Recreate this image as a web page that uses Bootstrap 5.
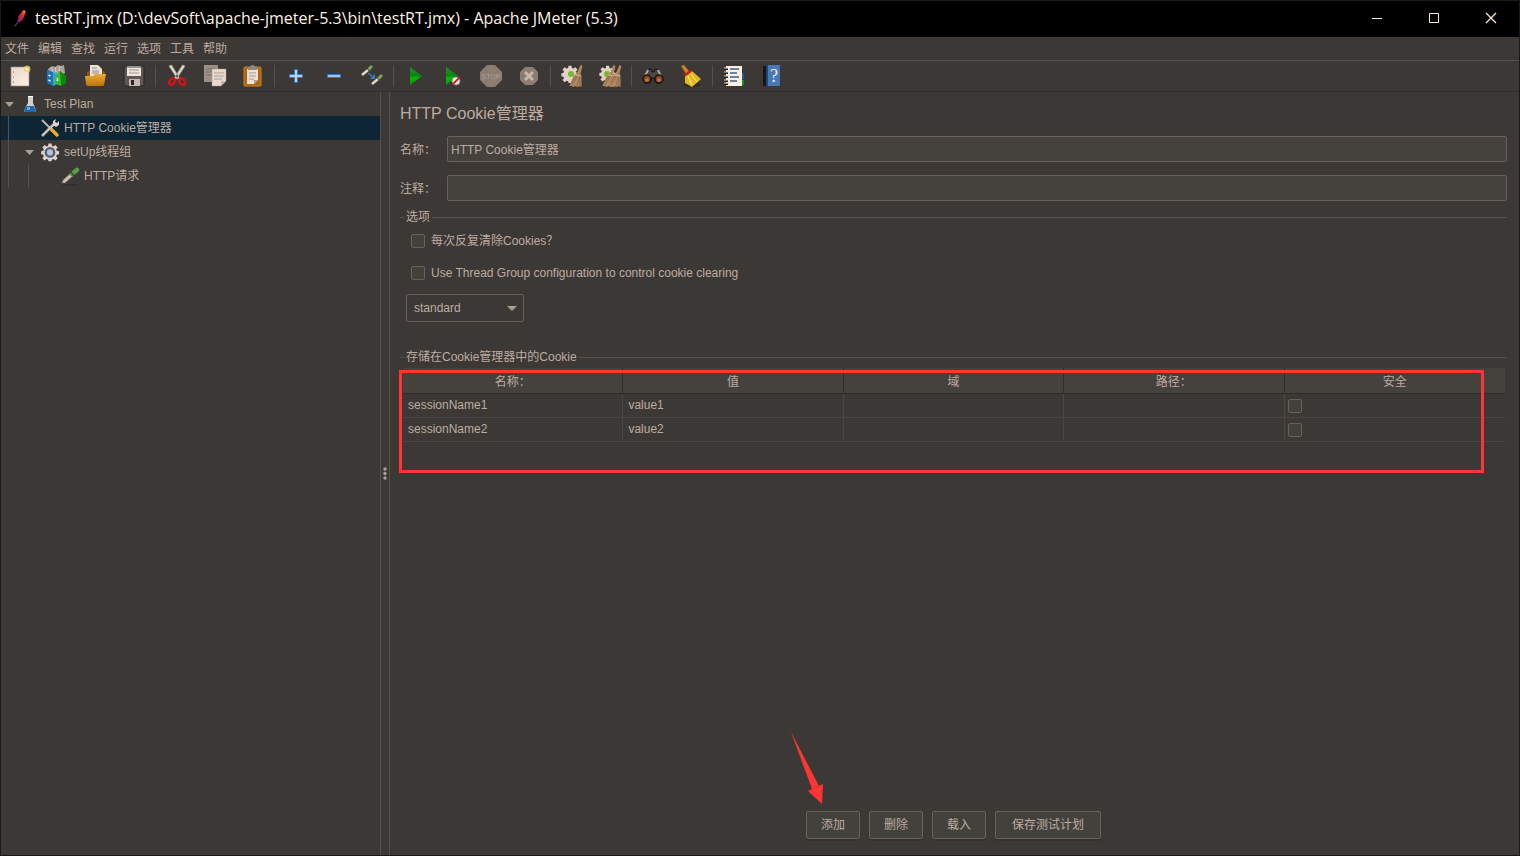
<!DOCTYPE html>
<html lang="zh-CN">
<head>
<meta charset="utf-8">
<meta name="viewport" content="width=device-width, initial-scale=1">
<title>testRT.jmx - Apache JMeter (5.3)</title>
<link href="https://cdn.jsdelivr.net/npm/bootstrap@5.3.0/dist/css/bootstrap.min.css" rel="stylesheet">
<style>
:root{--bg:#3c3835;--fg:#bcaca1;--line:#55504b;--edge:#6a605a;--field:#45413d;--red:#ff3535}
body{background:var(--bg);color:var(--fg);font:12px/24px "Liberation Sans","Noto Sans CJK SC",sans-serif;border:1px solid #1b1a19}
.titlebar{background:#000;color:#fff0e4;height:36px;font-family:"Open Sans",sans-serif;font-size:16px;padding-bottom:2px}
.feather{width:18px;height:18px;margin:0 7px 1px 9px}
.win-btn{width:57px;height:36px;color:#ffe8d8}
.win-btn svg{display:block;margin:auto}
.plain{background:none;border:0;padding:0}
.menubar{height:24px;border-bottom:1px solid var(--line);padding-left:4px;gap:9px}
.menubar a,.tree a{color:inherit;text-decoration:none}
.toolbar{height:31px;border-bottom:1px solid #312e2b}
.tool{width:38px;height:30px}
.tool svg{width:24px;height:24px;display:block;margin:auto}
.tool-sep{width:5px;height:22px;flex:none;background:linear-gradient(var(--line),var(--line)) center/1px 100% no-repeat}
.tree{width:379px;flex:none}
.tree ul{list-style:none;margin:0;padding:0}
.tree-row{height:24px}
.tree-row svg{flex:none}
.indent{width:20px;height:24px;flex:none}
.guide{background:linear-gradient(var(--line),var(--line)) 7px 0/1px 100% no-repeat}
.twisty{width:19px;height:24px;flex:none}
.picked{background:#0e2536}
.divider{width:10px;flex:none;border:1px solid var(--line);border-width:0 1px}
.main-pane{padding:9px 12px 16px 10px;min-width:0}
.main-pane h1{font-size:16px;line-height:26px;margin:0 0 9px;font-weight:400}
.field-row{margin-bottom:13px}
.field-row label{width:47px;flex:none;padding-top:1px}
.text-box{height:26px;background:var(--field);border:1px solid var(--edge);border-radius:2px;color:var(--fg);padding:0 3px 2px;font-size:12px;min-width:0}
.group legend{float:none;font-size:12px;line-height:16px;margin:0;gap:2px}
.group legend::before{content:"";width:4px;border-top:1px solid var(--line)}
.group legend::after{content:"";flex:1;border-top:1px solid var(--line)}
.group-options{margin-top:-5px}
.tick{appearance:none;width:14px;height:14px;margin:0;flex:none;background:#43413c;border:1px solid var(--edge);border-radius:2px}
.tick:checked{background:#8a8078}
.options{margin-top:-4px}
.options .check-row{height:32px;padding-left:11px;gap:6px}
.policy{width:118px;height:28px;margin:5px 0 27px 6px;padding:0 7px 1px;font-size:12px;color:var(--fg);background:var(--bg);border:1px solid var(--edge);border-radius:2px;appearance:none}
.policy-box svg{right:7px;top:17px;pointer-events:none}
.grid-wrap{margin:3px 2px 0 3px;height:105px}
.cookies{width:100%;table-layout:fixed;border-collapse:separate;border-spacing:0}
.cookies th{height:26px;line-height:22px;padding:3px 0 0;background:var(--field);font-weight:400;text-align:center;border-bottom:1px solid #2f2c29;border-right:1px solid #312e2b}
.cookies td{height:24px;line-height:20px;padding:0 5px 2px;border-bottom:1px solid #4b4642;border-right:1px solid #4b4642}
.cookies th:last-child,.cookies td:last-child{border-right:0}
.cookies td:last-child{padding:0 3px}
.cookies .tick{display:block}
.callout{border:3px solid var(--red);left:-4px;right:21px;top:2px;bottom:0;pointer-events:none}
.actions-row{gap:9px}
.act{height:28px;padding:0 14px;background:#43413c;color:var(--fg);border:1px solid var(--edge);border-radius:2px;box-shadow:0 2px 0 #353230;line-height:26px}
.act-wide{padding:0 16px}
.pointer{left:-16px;bottom:34px;width:36px;height:74px;pointer-events:none}
</style>
</head>
<body class="d-flex flex-column vh-100 overflow-hidden">
<svg width="0" height="0" class="position-absolute" aria-hidden="true">
 <defs>
  <linearGradient id="gGreen" x2="0" y2="1"><stop stop-color="#268c25"/><stop offset=".5" stop-color="#0a860a"/><stop offset=".6" stop-color="#0ab80b"/><stop offset="1" stop-color="#079106"/></linearGradient>
  <linearGradient id="gGold" x2="0" y2="1"><stop stop-color="#e7ad3e"/><stop offset="1" stop-color="#bd7306"/></linearGradient>
  <linearGradient id="gPaper" x2="1" y2="1"><stop stop-color="#e7d4c8"/><stop offset="1" stop-color="#fff0e4"/></linearGradient>
  <linearGradient id="gFeather" x1="1" x2="0" y2="1"><stop stop-color="#f69a22"/><stop offset=".45" stop-color="#d9232e"/><stop offset="1" stop-color="#702a78"/></linearGradient>
  <g id="cog"><path d="M10 1h4l.5 3 2 .8L19 3l3 3-2 2.500.8 2 3 .5v4l-3 .5-.8 2L22 20l-3 3-2.500-2-2 .8-.5 2.200h-4l-.5-2.200-2-.8L5 23l-3-3 2-2.500-.8-2-2.700-.5v-4l2.700-.5.8-2L2 6l3-3 2.500 1.800 2-.8z" fill="#e0d2c7"/></g>
  <g id="brush"><path d="M20.500 1l2 1-2 7 1 3v11l-2-1-2 1-2-1-2 1-2-1-2 0 4-10 4-4z" fill="#b08863"/><path d="M18 11l-6 10M20 11l-3 11M20 13l0 9M16 12l-5 7" stroke="#8a623e" stroke-width=".8"/><path d="M15 11l6 1" stroke="#d8b08a"/></g>
 </defs>
</svg>

<header class="titlebar d-flex align-items-center flex-shrink-0">
 <svg class="feather" viewBox="0 0 20 20"><path d="M14 2l2-1 1.500 2-3 8-4 4-2-1 1-6z" fill="url(#gFeather)"/><path d="M9.500 13l-4 6" stroke="#68306f" stroke-width="1.300"/></svg>
 <span class="flex-grow-1 text-truncate">testRT.jmx (D:\devSoft\apache-jmeter-5.3\bin\testRT.jmx) - Apache JMeter (5.3)</span>
 <button class="plain win-btn" aria-label="最小化"><svg width="12" height="12"><path d="M1 6.500h10" stroke="currentColor"/></svg></button>
 <button class="plain win-btn" aria-label="最大化"><svg width="12" height="12"><path d="M1.500 1.500h9v9h-9z" fill="none" stroke="currentColor"/></svg></button>
 <button class="plain win-btn" aria-label="关闭"><svg width="12" height="12"><path d="M1 1l10 10M11 1L1 11" stroke="currentColor" stroke-width="1.300"/></svg></button>
</header>

<nav class="menubar d-flex flex-shrink-0">
 <a href="#">文件</a><a href="#">编辑</a><a href="#">查找</a><a href="#">运行</a><a href="#">选项</a><a href="#">工具</a><a href="#">帮助</a>
</nav>

<div class="toolbar d-flex align-items-center flex-shrink-0" role="toolbar">
 <button class="plain tool" aria-label="新建"><svg viewBox="0 0 24 24"><path d="M3 3h18v19H3z" fill="url(#gPaper)" stroke="#9c8f85" stroke-width=".7"/><path d="M5.500 7v2M5.500 12v2M5.500 17v2" stroke="#b6a79b"/><circle cx="19" cy="5" r="3.500" fill="#ead36a" opacity=".75"/><circle cx="19" cy="5" r="1.500" fill="#fff6a8"/></svg></button>
 <button class="plain tool" aria-label="模板"><svg viewBox="0 0 24 24"><path d="M2 5l4-3 3 1 3-2 3 1 3-1 1 8-8 4-8-3z" fill="#a8a29c"/><path d="M5 3l2 5M9 3l1 5M14 2l-1 5" stroke="#d8cdc5"/><path d="M1 6l6 2v14l-6-3z" fill="#1673b5"/><path d="M7 8l4 1v11l-4 2z" fill="#39a4dc"/><path d="M9 12l5-5 2 3v12l-7-2z" fill="#3cba2e"/><path d="M14 7l6 5v7l-5 3z" fill="#0b8a0b"/><path d="M2.500 11l2 1M2.500 16l2 1M11.500 14v3" stroke="#e7eee5" stroke-width="1.600"/></svg></button>
 <button class="plain tool" aria-label="打开"><svg viewBox="0 0 24 24"><path d="M3 8l2-1h15l1 2-1 12H3z" fill="#8c550b"/><path d="M6 1h8l4 4v9H6z" fill="#eee1d7"/><path d="M8 4h5M8 7h7M8 9h7" stroke="#938982"/><path d="M1 12h8l2-2h11l-2 11q0 1-2 1H4q-2 0-2-2z" fill="url(#gGold)"/></svg></button>
 <button class="plain tool" aria-label="保存"><svg viewBox="0 0 24 24"><rect x="2" y="2" width="20" height="20" rx="1" fill="#5c5755" stroke="#282625"/><path d="M5 2h14v10H5z" fill="#f2e3d8"/><path d="M5 2h14v2H5z" fill="#8d9699"/><path d="M7 6h10M7 9h10" stroke="#9b9998"/><path d="M7 15h11v7H7z" fill="#c5b8ae"/><path d="M9 16h3v5H9z" fill="#292827"/></svg></button>
 <span class="tool-sep"></span>
 <button class="plain tool" aria-label="剪切"><svg viewBox="0 0 24 24"><path d="M4 2l2.500-1 8 13-2 1zM20 2l-2.500-1L9.500 14l2 1z" fill="#e2d8cf" stroke="#afa59d" stroke-width=".7"/><ellipse cx="7" cy="17.500" rx="2.500" ry="3.500" transform="rotate(35 7 17.500)" fill="none" stroke="#d31414" stroke-width="2.500"/><ellipse cx="17" cy="17.500" rx="2.500" ry="3.500" transform="rotate(-35 17 17.500)" fill="none" stroke="#d31414" stroke-width="2.500"/></svg></button>
 <button class="plain tool" aria-label="复制"><svg viewBox="0 0 24 24"><path d="M1 1h14v17H1z" fill="#9c8f87"/><path d="M3 5h10M3 8h10M3 11h8" stroke="#796f69"/><path d="M9 5h14v12l-5 5H9z" fill="#ecd9cd" stroke="#a69a91" stroke-width=".5"/><path d="M11 9h10M11 12h10M11 15h8" stroke="#aaa097"/><path d="M23 17h-5v5z" fill="#c6b6ac"/></svg></button>
 <button class="plain tool" aria-label="粘贴"><svg viewBox="0 0 24 24"><rect x="3" y="3" width="17" height="19" rx="1" fill="#ab650d" stroke="#d28422"/><path d="M6 5h11v11l-4 4H6z" fill="#eee1d8"/><path d="M8 9h7M8 12h7M8 15h5" stroke="#999691"/><path d="M7 3h2q0-2 2.500-2t2.500 2h2v3H7z" fill="#8d8b80"/><path d="M17 16h-4v4z" fill="#aaa097"/></svg></button>
 <span class="tool-sep"></span>
 <button class="plain tool" aria-label="展开"><svg viewBox="0 0 24 24"><path d="M10.500 5.500h3v5h5v3h-5v5h-3v-5h-5v-3h5z" fill="#b6d0ed" stroke="#3675bd"/></svg></button>
 <button class="plain tool" aria-label="折叠"><svg viewBox="0 0 24 24"><path d="M5.500 10.500h13v3h-13z" fill="#a4c2e8" stroke="#3675bd"/></svg></button>
 <button class="plain tool" aria-label="切换"><svg viewBox="0 0 24 24"><path d="M2 11l6-5M12 20l6-5" stroke="#e5d4c6" stroke-width="2.500"/><path d="M8 6l4-4M18 15l4-4" stroke="#7fa650" stroke-width="3"/><path d="M7 4l3 4M16.500 13l3 4" stroke="#3f5a2e" stroke-width="1"/><path d="M8 9l5 4" stroke="#367cc6" stroke-width="1.500"/><path d="M15 10v5h-5z" fill="#367cc6"/></svg></button>
 <span class="tool-sep"></span>
 <button class="plain tool" aria-label="启动"><svg viewBox="0 0 24 24"><path d="M7 3l12 9-12 9z" fill="url(#gGreen)"/></svg></button>
 <button class="plain tool" aria-label="不停顿开始"><svg viewBox="0 0 24 24"><path d="M5 3l12 9-12 9z" fill="url(#gGreen)"/><circle cx="15" cy="17" r="4" fill="#f1e8e4" stroke="#8794a5"/><path d="M11.500 20.500l7-7" stroke="#d51919" stroke-width="1.800"/></svg></button>
 <button class="plain tool" aria-label="停止"><svg viewBox="0 0 24 24"><path d="M8 1h8l7 7v8l-7 7H8l-7-7V8z" fill="#897c73"/><text x="12" y="15" text-anchor="middle" font-size="7" font-weight="700" fill="#a69486">STOP</text></svg></button>
 <button class="plain tool" aria-label="关闭线程"><svg viewBox="0 0 24 24"><path d="M8 3h8l5 5v8l-5 5H8l-5-5V8z" fill="#8b7d73"/><path d="M8 8l8 8M16 8l-8 8" stroke="#c8b8aa" stroke-width="3"/></svg></button>
 <span class="tool-sep"></span>
 <button class="plain tool" aria-label="清除"><svg viewBox="0 0 24 24"><use href="#cog" transform="translate(1 1) scale(.75)"/><circle cx="11" cy="10" r="3" fill="#78b82b"/><use href="#brush"/></svg></button>
 <button class="plain tool" aria-label="清除全部"><svg viewBox="0 0 24 24"><use href="#cog" transform="translate(1 1) scale(.72)"/><circle cx="9" cy="10" r="3" fill="#78b82b"/><use href="#brush" transform="translate(-5 0)"/><use href="#brush" transform="translate(1 0)"/></svg></button>
 <span class="tool-sep"></span>
 <button class="plain tool" aria-label="查找"><svg viewBox="0 0 24 24"><path d="M6 6l4-1 1 3h2l1-3 4 1 4 9-2 4-5 0-2-5h-2l-2 5H4l-2-4z" fill="#4c4742" stroke="#171513"/><path d="M7 6l-3 6M17 6l3 6" stroke="#b4aaa2" stroke-width="2"/><circle cx="6" cy="15" r="4" fill="#874521" stroke="#171513" stroke-width="1.500"/><circle cx="18" cy="15" r="4" fill="#874521" stroke="#171513" stroke-width="1.500"/><circle cx="6" cy="16" r="1.800" fill="#c47540"/><circle cx="18" cy="16" r="1.800" fill="#c47540"/></svg></button>
 <button class="plain tool" aria-label="重置查找"><svg viewBox="0 0 24 24"><ellipse cx="13" cy="21" rx="9" ry="2" fill="#2f2b29"/><path d="M2 2l3-1 5 6-3 3z" fill="#c97f25"/><path d="M6 12l7-5 9 8-9 8-7-4z" fill="#e2b91f"/><path d="M9 12l4 9M12 10l6 8" stroke="#fae572" stroke-width="1.200"/><path d="M5.500 11.500l7-5" stroke="#cd1c19" stroke-width="2.500"/></svg></button>
 <span class="tool-sep"></span>
 <button class="plain tool" aria-label="函数助手"><svg viewBox="0 0 24 24"><path d="M19 9h3v6h-3z" fill="#22599c"/><path d="M19 16h3v5h-3z" fill="#168e1b"/><path d="M4 2h16v20H4z" fill="#fff0e4"/><path d="M8 5h9M8 9h7M8 13h9M8 17h7" stroke="#3d5d84" stroke-width="1.300"/><path d="M2 5h4M2 9h4M2 13h4M2 17h4M2 20h4" stroke="#262321" stroke-width="2"/><path d="M2 4h4M2 8h4M2 12h4M2 16h4M2 19h4" stroke="#e0d1c5"/></svg></button>
 <button class="plain tool" aria-label="帮助"><svg viewBox="0 0 24 24"><path d="M3 2h3v20H3z" fill="#161718"/><path d="M6 1h14v20l-1 1H6z" fill="#4779b9"/><path d="M6 1h2v21H6z" fill="#24446b"/><text x="14" y="18" font-size="18" text-anchor="middle" font-family="Liberation Serif,serif" fill="#f1e9e7">?</text></svg></button>
</div>

<main class="d-flex flex-grow-1">
 <nav class="tree">
  <ul>
   <li class="tree-row d-flex align-items-center">
    <svg class="twisty" viewBox="0 0 19 24"><path d="M4 10h9l-4.500 5z" fill="#aa9d92"/></svg>
    <svg width="20" height="20" viewBox="0 0 20 20"><path d="M8 3h5v6l3 7q0 2-2 2H6q-2 0-2-2l4-7z" fill="#d5d0ca"/><path d="M6.500 12h7l2.500 4q0 2-2 2H6q-2 0-2-2z" fill="#1d68ac"/><path d="M7 13h3v3H7z" fill="#68a9dc"/><path d="M8 2h5v1H8z" fill="#fff"/></svg>
    <a href="#" class="ms-1">Test Plan</a></li>
   <li class="tree-row picked d-flex align-items-center"><span class="indent guide"></span><span class="twisty"></span>
    <svg width="20" height="20" viewBox="0 0 20 20"><path d="M2 2l8 8" stroke="#bfb5aa" stroke-width="2"/><path d="M11 11l6 6" stroke="#e8ac26" stroke-width="3.500" stroke-linecap="round"/><path d="M2 18L15 5" stroke="#c8beb2" stroke-width="2.500"/><path d="M13 7V3l3-2-1 3 2 1 2-2v4l-3 2z" fill="#ded4c9"/></svg>
    <a href="#" class="ms-1">HTTP Cookie管理器</a></li>
   <li class="tree-row d-flex align-items-center"><span class="indent guide"></span>
    <svg class="twisty" viewBox="0 0 19 24"><path d="M4 10h9l-4.500 5z" fill="#aa9d92"/></svg>
    <svg width="20" height="20" viewBox="-1 -1 26 26"><use href="#cog"/><circle cx="12" cy="12.500" r="5.500" fill="#b8c1cc" stroke="#4c6083" stroke-width="3"/></svg>
    <a href="#" class="ms-1">setUp线程组</a></li>
   <li class="tree-row d-flex align-items-center"><span class="indent guide"></span><span class="indent guide"></span><span class="twisty"></span>
    <svg width="20" height="20" viewBox="0 0 20 20"><path d="M3 19h14" stroke="#292624" stroke-width="2" opacity=".5"/><path d="M2 17l1-3 9-8 2 3-9 8z" fill="#ccc0b5" stroke="#6b655e" stroke-width=".7"/><path d="M12 8l5-4" stroke="#5c9a44" stroke-width="4.500" stroke-linecap="round"/><path d="M10 5l4 5" stroke="#304f28" stroke-width="1.500"/></svg>
    <a href="#" class="ms-1">HTTP请求</a></li>
  </ul>
 </nav>
 <div class="divider d-flex align-items-center justify-content-center"><svg width="4" height="13" viewBox="0 0 4 13" fill="#aba097"><circle cx="2" cy="2" r="1.700"/><circle cx="2" cy="6.500" r="1.700"/><circle cx="2" cy="11" r="1.700"/></svg></div>
 <section class="main-pane flex-grow-1 d-flex flex-column">
  <h1>HTTP Cookie管理器</h1>
  <div class="field-row d-flex align-items-center"><label for="nm">名称：</label><input id="nm" class="text-box flex-grow-1" type="text" value="HTTP Cookie管理器"></div>
  <div class="field-row d-flex align-items-center"><label for="cm">注释：</label><input id="cm" class="text-box flex-grow-1" type="text"></div>
  <fieldset class="group group-options">
   <legend class="d-flex align-items-center">选项</legend>
   <div class="options pt-1">
    <div class="check-row d-flex align-items-center"><input class="tick" type="checkbox" id="c1"><label for="c1">每次反复清除Cookies？</label></div>
    <div class="check-row d-flex align-items-center"><input class="tick" type="checkbox" id="c2"><label for="c2">Use Thread Group configuration to control cookie clearing</label></div>
    <div class="policy-box position-relative d-inline-block"><select class="policy d-block" aria-label="Cookie policy"><option>standard</option></select><svg class="position-absolute" width="10" height="5"><path d="M0 0h10L5 5z" fill="#aa9d92"/></svg></div>
   </div>
  </fieldset>
  <fieldset class="group">
   <legend class="d-flex align-items-center">存储在Cookie管理器中的Cookie</legend>
   <div class="grid-wrap position-relative">
    <table class="cookies">
     <thead><tr><th>名称：</th><th>值</th><th>域</th><th>路径：</th><th>安全</th></tr></thead>
     <tbody>
      <tr><td>sessionName1</td><td>value1</td><td></td><td></td><td><input class="tick" type="checkbox" aria-label="安全 sessionName1"></td></tr>
      <tr><td>sessionName2</td><td>value2</td><td></td><td></td><td><input class="tick" type="checkbox" aria-label="安全 sessionName2"></td></tr>
     </tbody>
    </table>
    <div class="callout position-absolute"></div>
   </div>
  </fieldset>
  <div class="d-flex justify-content-center mt-auto">
   <div class="actions-row position-relative d-flex">
    <svg class="pointer position-absolute" viewBox="0 0 36 74"><path d="M1 1l28 54 4-2-1 20-14-13 4-2z" fill="#ff3535"/></svg>
    <button class="act">添加</button><button class="act">删除</button><button class="act">载入</button><button class="act act-wide">保存测试计划</button>
   </div>
  </div>
 </section>
</main>
<script src="https://cdn.jsdelivr.net/npm/bootstrap@5.3.0/dist/js/bootstrap.bundle.min.js"></script>
</body>
</html>
